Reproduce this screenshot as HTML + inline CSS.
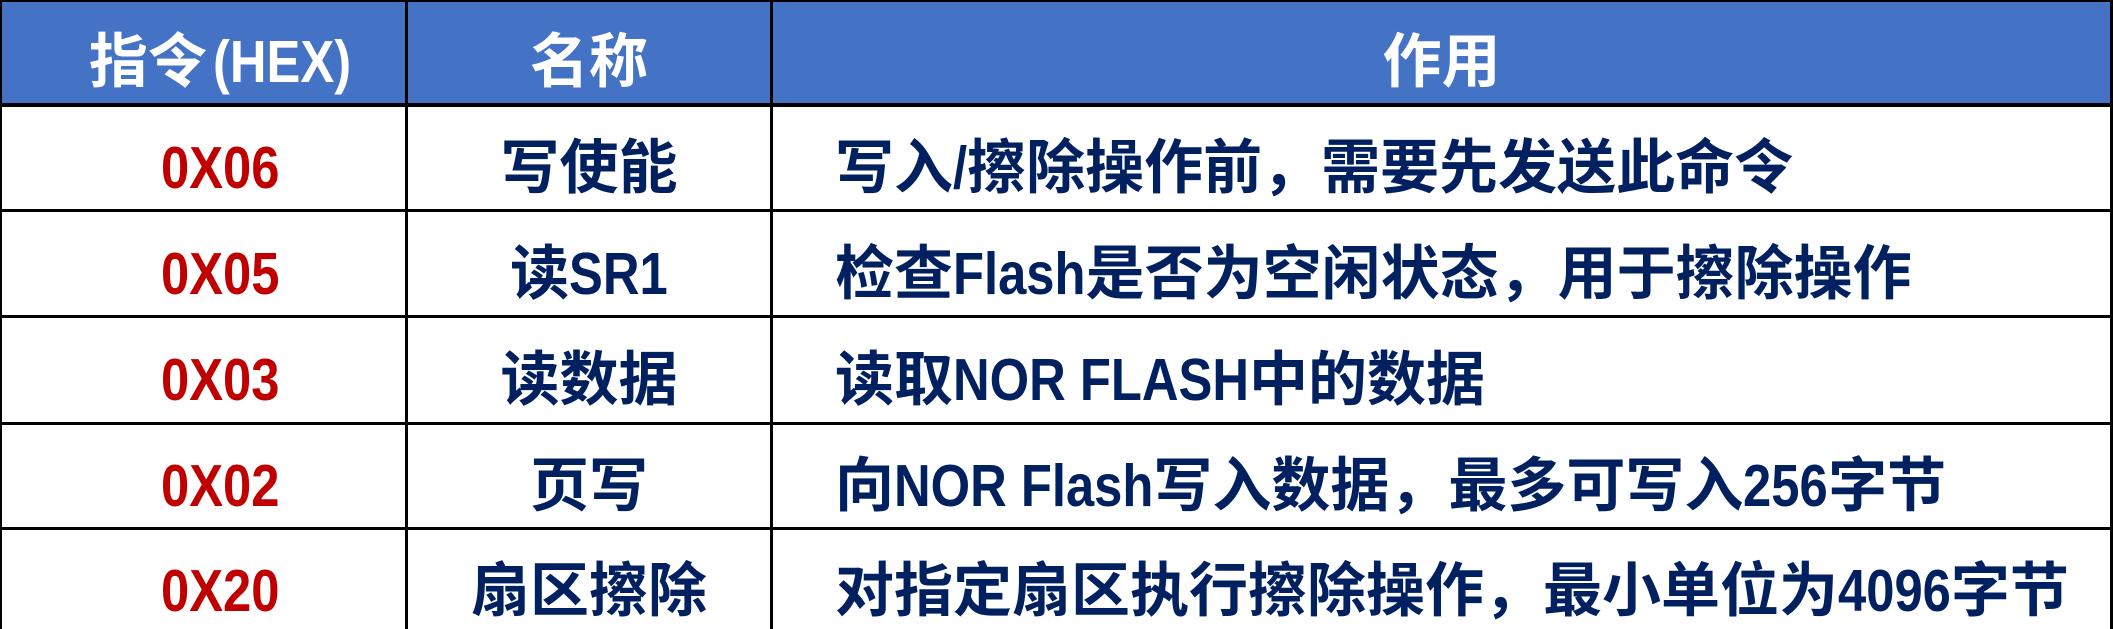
<!DOCTYPE html>
<html><head><meta charset="utf-8"><style>
body{margin:0;width:2113px;height:629px;background:#fff;overflow:hidden;position:relative;font-family:"Liberation Sans","Noto Sans CJK SC",sans-serif;font-weight:bold}
.h{position:absolute;left:0;width:2113px;background:#000}
.v{position:absolute;top:0;height:629px;width:3px;background:#000}
.hdr{position:absolute;left:0;top:0;width:2113px;height:104px;background:#4472C4}
.t{position:absolute;font-size:59px;line-height:60px;white-space:nowrap}
.w{color:#fff}
.n{color:#002060}
.r{color:#c00000}
.l{display:inline-block;transform:scaleX(.86);transform-origin:0 50%;margin-right:calc(var(--w) * -0.14em)}
.c1{left:0;width:440px;text-align:center}
.c2{left:408px;width:362px;text-align:center}
.c3{left:835px}
</style></head><body>
<div class="hdr"></div>
<div class="h" style="top:0;height:2px"></div>
<div class="h" style="top:103px;height:4px"></div>
<div class="h" style="top:209px;height:3px"></div>
<div class="h" style="top:315px;height:3px"></div>
<div class="h" style="top:422px;height:3px"></div>
<div class="h" style="top:527px;height:3px"></div>
<div class="v" style="left:0;width:2px"></div>
<div class="v" style="left:405px"></div>
<div class="v" style="left:770px"></div>
<div class="v" style="left:2110px"></div>

<div class="t w c1" style="top:32px">指令<span class="l" style="--w:2.722;margin-left:6px">(HEX)</span></div>
<div class="t w c2" style="top:32px">名称</div>
<div class="t w" style="left:773px;width:1337px;text-align:center;top:32px">作用</div>

<div class="t r c1" style="top:138px"><span class="l" style="--w:2.335">0X06</span></div>
<div class="t n c2" style="top:138px">写使能</div>
<div class="t n c3" style="top:138px">写入<span class="l" style="--w:.278">/</span>擦除操作前，需要先发送此命令</div>

<div class="t r c1" style="top:244px"><span class="l" style="--w:2.335">0X05</span></div>
<div class="t n c2" style="top:244px">读<span class="l" style="--w:1.945">SR1</span></div>
<div class="t n c3" style="top:244px">检查<span class="l" style="--w:2.612">Flash</span>是否为空闲状态，用于擦除操作</div>

<div class="t r c1" style="top:350px"><span class="l" style="--w:2.335">0X03</span></div>
<div class="t n c2" style="top:350px">读数据</div>
<div class="t n c3" style="top:350px">读取<span class="l" style="--w:5.833">NOR FLASH</span>中的数据</div>

<div class="t r c1" style="top:456px"><span class="l" style="--w:2.335">0X02</span></div>
<div class="t n c2" style="top:456px">页写</div>
<div class="t n c3" style="top:456px">向<span class="l" style="--w:5.112">NOR Flash</span>写入数据，最多可写入<span class="l" style="--w:1.668">256</span>字节</div>

<div class="t r c1" style="top:561px"><span class="l" style="--w:2.335">0X20</span></div>
<div class="t n c2" style="top:561px">扇区擦除</div>
<div class="t n c3" style="top:561px">对指定扇区执行擦除操作，最小单位为<span class="l" style="--w:2.224">4096</span>字节</div>
</body></html>
